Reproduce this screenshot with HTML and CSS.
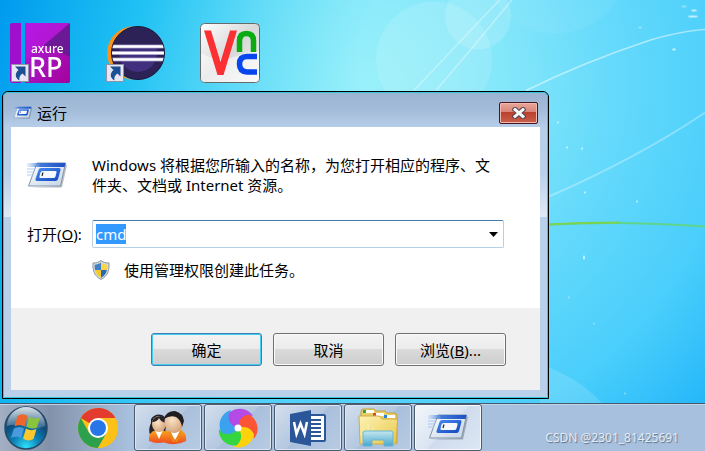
FILE: index.html
```html
<!DOCTYPE html>
<html lang="zh-CN">
<head>
    <meta charset="UTF-8">
    <meta name="viewport" content="width=device-width, initial-scale=1.0">
    <title>运行</title>
    <link rel="stylesheet" href="styles.css">
</head>
<body>
    <!-- shared drawings -->
    <svg class="defs" width="0" height="0" aria-hidden="true">
        <defs>
            <linearGradient id="runBar" x1="0" x2="1" y1="0" y2="0">
                <stop offset="0" stop-color="#8fb6ee" stop-opacity="0.2"/>
                <stop offset="0.35" stop-color="#3f78d8"/>
                <stop offset="1" stop-color="#1c50c4"/>
            </linearGradient>
            <linearGradient id="runBlue" x1="0" x2="1" y1="0" y2="1">
                <stop offset="0" stop-color="#4a8cf0"/>
                <stop offset="1" stop-color="#1146bd"/>
            </linearGradient>
            <linearGradient id="runSheet" x1="0" x2="1" y1="0" y2="1">
                <stop offset="0" stop-color="#ffffff"/>
                <stop offset="1" stop-color="#c3d3e4"/>
            </linearGradient>
        </defs>
        <symbol id="icon-run" viewBox="0 0 40 28">
            <path d="M3 25.5L35 25.5L40 3L38 2L33 24Z" fill="#000" opacity="0.25"/>
            <path d="M10 1H38.500L33.500 24H1.500Z" fill="url(#runSheet)" stroke="#8095ac" stroke-width="1"/>
            <path d="M0 1H38.500L37.500 5H0Z" fill="url(#runBar)"/>
            <path d="M0 7H8M0 10H7M0 13H6" stroke="#a9c8f2" stroke-width="1.500" opacity="0.6"/>
            <path d="M14 6H32Q34 6 33.500 8L31 17Q30.500 19 28.500 19H10Q8 19 8.500 17L11.500 8Q12 6 14 6Z" fill="url(#runBlue)"/>
            <path d="M15.500 9H28.500Q30 9 29.500 10.500L28.500 14.500Q28 16 26.500 16H13.500Q12 16 12.500 14.500L13.500 10.500Q14 9 15.500 9Z" fill="#f5f9ff"/>
            <path d="M16 10.500L15 14" stroke="#222" stroke-width="1.200"/>
        </symbol>
        <symbol id="icon-shortcut" viewBox="0 0 18 18">
            <rect x="0.500" y="0.500" width="17" height="17" fill="#e9e6f4" stroke="#8e94a5"/>
            <path d="M4 2.500H14.500V12.500L11.500 9.500C8.500 11.500 8 13.500 8.500 16.500C4 14 3.500 9.500 7.500 6Z" fill="#1d4f93"/>
        </symbol>
    </svg>

    <main class="desktop">
        <svg class="wallpaper" viewBox="0 0 705 404" preserveAspectRatio="xMidYMid slice" aria-hidden="true">
            <defs>
                <radialGradient id="sky" gradientUnits="userSpaceOnUse" cx="370" cy="80" r="480">
                    <stop offset="0" stop-color="#98f0fa"/>
                    <stop offset="0.280" stop-color="#84e7fa"/>
                    <stop offset="0.500" stop-color="#66dafb"/>
                    <stop offset="0.760" stop-color="#4acefb"/>
                    <stop offset="1" stop-color="#20b4fa"/>
                </radialGradient>
                <linearGradient id="deep" x1="0" x2="1" y1="0" y2="0.150">
                    <stop offset="0" stop-color="#009aee"/>
                    <stop offset="0.200" stop-color="#14bdf2" stop-opacity="0.850"/>
                    <stop offset="0.520" stop-color="#50d8f5" stop-opacity="0"/>
                </linearGradient>
            </defs>
            <rect width="705" height="404" fill="url(#sky)"/>
            <rect width="705" height="404" fill="url(#deep)"/>
            <circle cx="434" cy="60" r="58" fill="#fff" opacity="0.120"/>
            <circle cx="478" cy="17" r="33" fill="#fff" opacity="0.150"/>
            <circle cx="556" cy="-40" r="74" fill="#fff" opacity="0.060"/>
            <path d="M414 91Q456 46 500 0M436 91Q474 47 512 0" stroke="#fff" stroke-width="1.500" opacity="0.350" fill="none"/>
            <path d="M526 91Q585 62 652 40Q685 31 705 30" stroke="#fff" stroke-width="1.500" opacity="0.500" fill="none"/>
            <path d="M549 197Q640 157 705 113" stroke="#fff" stroke-width="2" opacity="0.300" fill="none"/>
            <path d="M549 225Q625 221 705 227" stroke="#5fd58c" stroke-width="2" fill="none"/>
            <path d="M549 225Q580 223 620 223" stroke="#7cd34c" stroke-width="2" fill="none"/>
            <path d="M540 365Q578 377 602 404H540Z" fill="#fff" opacity="0.140"/>
            <g fill="#fff" opacity="0.700">
                <ellipse cx="693" cy="17" rx="5" ry="1"/>
                <ellipse cx="694" cy="11" rx="3" ry="1"/>
                <ellipse cx="684" cy="7" rx="3" ry="1" opacity="0.500"/>
                <ellipse cx="674" cy="50" rx="2" ry="1"/>
                <ellipse cx="640" cy="28" rx="2" ry="1" opacity="0.500"/>
                <circle cx="558" cy="123" r="1"/>
                <circle cx="567" cy="148" r="1"/>
                <circle cx="582" cy="149" r="1"/>
                <circle cx="585" cy="193" r="1"/>
                <circle cx="637" cy="202" r="1"/>
                <ellipse cx="584" cy="258" rx="1" ry="2"/>
                <circle cx="569" cy="298" r="1" opacity="0.600"/>
                <circle cx="594" cy="324" r="1" opacity="0.500"/>
                <circle cx="625" cy="394" r="1" opacity="0.600"/>
            </g>
        </svg>

        <ul class="shortcuts">
            <li class="shortcut">
                <svg width="60" height="60" viewBox="0 0 60 60" role="img" aria-label="Axure RP">
                    <defs>
                        <linearGradient id="axure" x1="0" x2="1" y1="0" y2="1">
                            <stop offset="0" stop-color="#b414e0"/>
                            <stop offset="0.500" stop-color="#a614bc"/>
                            <stop offset="1" stop-color="#a6009c"/>
                        </linearGradient>
                    </defs>
                    <path d="M2 0H11V60H2Q0 60 0 58V2Q0 0 2 0Z" fill="#a010cc"/>
                    <path d="M15 0H58Q60 0 60 2V58Q60 60 58 60H15Z" fill="url(#axure)"/>
                    <path d="M60 0L34 22L60 34Z" fill="#5c1b8c" opacity="0.800"/>
                    <path d="M15 0H60L15 38Z" fill="#c21cf0" opacity="0.350"/>
                    <text class="axure-name" x="21" y="30">axure</text>
                    <text class="axure-rp" x="19" y="54">RP</text>
                    <use href="#icon-shortcut" x="1" y="41" width="18" height="18"/>
                </svg>
            </li>
            <li class="shortcut">
                <svg width="60" height="60" viewBox="0 0 60 60" role="img" aria-label="Eclipse">
                    <defs>
                        <clipPath id="eclipseDisc"><circle cx="33" cy="30" r="26"/></clipPath>
                    </defs>
                    <path d="M27 3C-6 8 -6 52 27 57C2 49 2 12 27 3Z" fill="#f7941e"/>
                    <circle cx="33" cy="30" r="26.500" fill="#2c2255" stroke="#1b1538"/>
                    <g clip-path="url(#eclipseDisc)">
                        <circle cx="33" cy="30" r="19" fill="#41307d"/>
                        <rect x="6" y="3" width="54" height="20" fill="#2c2255"/>
                        <path d="M6 23.500H60M6 30H60M6 36.500H60" stroke="#8d83bd" stroke-width="4"/>
                        <path d="M6 23.500H60M6 30H60M6 36.500H60" stroke="#fff" stroke-width="2.500"/>
                    </g>
                    <use href="#icon-shortcut" x="1" y="41" width="18" height="18"/>
                </svg>
            </li>
            <li class="shortcut">
                <svg width="60" height="60" viewBox="0 0 60 60" role="img" aria-label="VNC">
                    <defs>
                        <linearGradient id="vnc" x1="0" x2="1" y1="0" y2="1">
                            <stop offset="0" stop-color="#ffffff"/>
                            <stop offset="0.500" stop-color="#d8d8d8"/>
                            <stop offset="1" stop-color="#f8f8f8"/>
                        </linearGradient>
                    </defs>
                    <rect x="0.500" y="0.500" width="59" height="59" rx="4" fill="url(#vnc)" stroke="#666b6d"/>
                    <path d="M1 30Q18 40 34 34T59 28V56Q59 59 56 59H4Q1 59 1 56Z" fill="#fff" opacity="0.500"/>
                    <path d="M4 7.500H11L20.500 39L30 7.500H37L23.500 52H17.500Z" fill="#fb3032"/>
                    <path d="M39.500 29V18Q39.500 10.500 46.500 10.500T53.500 18V29" fill="none" stroke="#0aac11" stroke-width="5.500"/>
                    <path d="M57 33.500H47Q39.500 33.500 39.500 41T47 49H57" fill="none" stroke="#0746ee" stroke-width="5.500"/>
                </svg>
            </li>
        </ul>

        <section class="window" role="dialog" aria-labelledby="windowTitle">
            <header class="title-bar">
                <svg class="title-icon" aria-hidden="true"><use href="#icon-run"/></svg>
                <h1 id="windowTitle">运行</h1>
                <button type="button" class="close" aria-label="关闭">
                    <svg width="14" height="12" viewBox="0 0 14 12" aria-hidden="true">
                        <path d="M3 2.500L11 9.500M11 2.500L3 9.500" stroke="#50434d" stroke-width="5" stroke-linecap="square"/>
                        <path d="M3 2.500L11 9.500M11 2.500L3 9.500" stroke="#f6f6f6" stroke-width="3" stroke-linecap="square"/>
                    </svg>
                </button>
            </header>

            <form class="run-form" id="runForm">
                <div class="fields">
                    <svg class="run-icon" aria-hidden="true"><use href="#icon-run"/></svg>
                    <p class="intro">Windows 将根据您所输入的名称，为您打开相应的程序、文件夹、文档或 Internet 资源。</p>

                    <label for="command">打开(<u>O</u>):</label>
                    <div class="combo">
                        <input type="text" id="command" name="command" value="cmd" autocomplete="off" spellcheck="false">
                        <button type="button" class="combo-arrow" aria-label="展开列表">
                            <svg width="9" height="5" viewBox="0 0 9 5" aria-hidden="true"><path d="M0 0H9L4.500 5Z"/></svg>
                        </button>
                    </div>

                    <div class="admin-note">
                        <svg width="18" height="20" viewBox="0 0 18 20" aria-hidden="true">
                            <path d="M9 0.500C6.500 2.500 4 3 1 3C0.500 11 2.500 16 9 19.500C15.500 16 17.500 11 17 3C14 3 11.500 2.500 9 0.500Z" fill="#d5d9dc" stroke="#8d979f"/>
                            <path d="M9 2.500C7 4 5 4.500 2.800 4.700C2.600 7 2.700 8.500 3.100 10H9Z" fill="#3f7fc6"/>
                            <path d="M9 2.500C11 4 13 4.500 15.200 4.700C15.400 7 15.300 8.500 14.900 10H9Z" fill="#f8d648"/>
                            <path d="M3.100 10C4 13.500 5.500 15.700 9 17.800V10Z" fill="#f3c92c"/>
                            <path d="M14.900 10C14 13.500 12.500 15.700 9 17.800V10Z" fill="#2b68b2"/>
                        </svg>
                        <span>使用管理权限创建此任务。</span>
                    </div>
                </div>

                <div class="actions">
                    <button type="submit" class="default">确定</button>
                    <button type="button">取消</button>
                    <button type="button">浏览(<u>B</u>)...</button>
                </div>
            </form>
        </section>
    </main>

    <nav class="taskbar">
        <button type="button" class="start" aria-label="开始">
            <svg width="44" height="44" viewBox="0 0 44 44" aria-hidden="true">
                <defs>
                    <radialGradient id="orb" cx="0.500" cy="0.950" r="0.900">
                        <stop offset="0" stop-color="#2fe0fa"/>
                        <stop offset="0.350" stop-color="#0c84b8"/>
                        <stop offset="0.700" stop-color="#0d4a7c"/>
                        <stop offset="1" stop-color="#52708c"/>
                    </radialGradient>
                    <linearGradient id="orbShine" x1="0" x2="0" y1="0" y2="1">
                        <stop offset="0" stop-color="#e6edf2" stop-opacity="0.900"/>
                        <stop offset="1" stop-color="#a7bccb" stop-opacity="0.250"/>
                    </linearGradient>
                </defs>
                <circle cx="22" cy="22" r="21" fill="url(#orb)" stroke="#264a66" stroke-width="1.500"/>
                <path d="M3 20A19 19 0 0 1 41 20Q31 25 22 21T3 20Z" fill="url(#orbShine)"/>
                <path d="M13.500 10Q18.500 6.500 23.500 10L20.500 20.500Q16 17.500 10.500 20.500Z" fill="#f0652a"/>
                <path d="M25 10.500Q30 14 36 11.500L33 21.500Q27.500 24 22.500 20.500Z" fill="#8ac43c"/>
                <path d="M10 22.500Q15.500 19.500 20 22.500L17 32Q12 29.500 7 32Z" fill="#4a9ade"/>
                <path d="M22 22.500Q27 25.500 32.500 23L29.500 33Q24 36 19 32.500Z" fill="#fbc72d"/>
            </svg>
        </button>
        <button type="button" class="pinned" aria-label="Chrome">
            <svg width="40" height="40" viewBox="0 0 40 40" aria-hidden="true">
                <circle cx="20" cy="20" r="20" fill="#fbc116"/>
                <path d="M20 20L2.700 10A20 20 0 0 1 37.300 10Z" fill="#e33b2e"/>
                <path d="M20 10H37.300A20 20 0 0 0 20 0Z" fill="#e33b2e"/>
                <path d="M2.700 10A20 20 0 0 0 20 40L28.700 25L20 20L11.300 25Z" fill="#2da04e"/>
                <path d="M20 10H37.300A20 20 0 0 1 20 40L28.700 25Z" fill="#fbc116"/>
                <circle cx="20" cy="20" r="10" fill="#fff"/>
                <circle cx="20" cy="20" r="8" fill="#2676e8"/>
            </svg>
        </button>
        <button type="button" class="task" aria-label="用户">
            <svg width="40" height="36" viewBox="0 0 40 36" aria-hidden="true">
                <defs>
                    <linearGradient id="coat" x1="0" x2="0" y1="0" y2="1">
                        <stop offset="0" stop-color="#fbae1c"/>
                        <stop offset="1" stop-color="#ed4a20"/>
                    </linearGradient>
                    <radialGradient id="skin" cx="0.400" cy="0.400" r="0.700">
                        <stop offset="0" stop-color="#fbe3c8"/>
                        <stop offset="1" stop-color="#d09c70"/>
                    </radialGradient>
                </defs>
                <path d="M3 9Q7 3 14 5Q19 7 18 15L17 25H2Q0 19 3 13Z" fill="#24242a"/>
                <path d="M1 31Q0 22 8 20H15Q20 22 20 31Q10 35 1 31Z" fill="url(#coat)"/>
                <path d="M7 20L11 29L15 20Z" fill="#fff"/>
                <ellipse cx="11" cy="14" rx="7" ry="8" fill="url(#skin)"/>
                <path d="M4 12Q6 6 13 6Q17 7 18 13Q13 12 11 8Q9 12 4 12Z" fill="#24242a"/>
                <path d="M15 32Q14 21 23 19H31Q39 22 38 31Q27 37 15 32Z" fill="url(#coat)"/>
                <path d="M22 21L27 30L32 21Z" fill="#fff"/>
                <path d="M21 21L26 32M33 21L28 32" stroke="#e98b16" stroke-width="2"/>
                <ellipse cx="26" cy="12" rx="9.500" ry="11" fill="url(#skin)"/>
                <path d="M16 9Q18 1 27 1Q35 3 36 11L34 17Q33 10 28 7Q22 5 16 9Z" fill="#1e1e22"/>
            </svg>
        </button>
        <button type="button" class="task" aria-label="浏览器">
            <svg width="40" height="40" viewBox="-20 -20 40 40" aria-hidden="true">
                <path d="M0 0C-7 -2 -11 -8 -9 -15C-2 -21 9 -21 15 -12C9 -13 6 -9 6 -3Z" fill="#b44be6"/>
                <path d="M0 0C-7 -2 -11 -8 -9 -15C-2 -21 9 -21 15 -12C9 -13 6 -9 6 -3Z" fill="#fb5436" transform="rotate(72)"/>
                <path d="M0 0C-7 -2 -11 -8 -9 -15C-2 -21 9 -21 15 -12C9 -13 6 -9 6 -3Z" fill="#fcd20d" transform="rotate(144)"/>
                <path d="M0 0C-7 -2 -11 -8 -9 -15C-2 -21 9 -21 15 -12C9 -13 6 -9 6 -3Z" fill="#34d53f" transform="rotate(216)"/>
                <path d="M0 0C-7 -2 -11 -8 -9 -15C-2 -21 9 -21 15 -12C9 -13 6 -9 6 -3Z" fill="#3aa2ef" transform="rotate(288)"/>
                <path d="M0 0C-7 -2 -11 -8 -9 -15L-4 -18Q-5 -9 2 -5Z" fill="#b44be6"/>
                <circle r="3.500" fill="#fff"/>
            </svg>
        </button>
        <button type="button" class="task" aria-label="Word">
            <svg width="36" height="36" viewBox="0 0 36 36" aria-hidden="true">
                <rect x="17" y="5" width="18" height="26" rx="1" fill="#fff" stroke="#2b579a" stroke-width="2"/>
                <path d="M20 10H31M20 14H31M20 18H31M20 22H31M20 26H31" stroke="#2b579a" stroke-width="2"/>
                <path d="M0 4L21 0V36L0 32Z" fill="#2b579a"/>
                <path d="M4 12L6.500 24L10.500 13.500L14.500 24L17 12" fill="none" stroke="#fff" stroke-width="2.500"/>
            </svg>
        </button>
        <button type="button" class="task" aria-label="资源管理器">
            <svg width="40" height="40" viewBox="0 0 40 40" aria-hidden="true">
                <defs>
                    <linearGradient id="folder" x1="0" x2="1" y1="0" y2="1">
                        <stop offset="0" stop-color="#fdf3b4"/>
                        <stop offset="1" stop-color="#e8c64a"/>
                    </linearGradient>
                    <linearGradient id="stand" x1="0" x2="0" y1="0" y2="1">
                        <stop offset="0" stop-color="#c3e9f5"/>
                        <stop offset="1" stop-color="#3fa6d4"/>
                    </linearGradient>
                </defs>
                <path d="M3 4Q3 1 5 1H16L18 3H27L29 5H36Q39 5 39 8V35H3Z" fill="#e7cd68" stroke="#c5a23c"/>
                <rect x="5" y="2" width="11" height="3" fill="#fff"/>
                <rect x="5" y="2" width="3" height="3" fill="#2fa246"/>
                <rect x="15" y="5" width="11" height="3" fill="#fff"/>
                <rect x="15" y="5" width="3" height="3" fill="#dc4a2e"/>
                <rect x="26" y="7" width="11" height="3" fill="#fff"/>
                <rect x="26" y="7" width="3" height="3" fill="#2b84cf"/>
                <path d="M1 8H20Q22 8 23 10L24 11H38Q39.500 11 39.500 13L38 36H2Z" fill="url(#folder)" stroke="#d1ad45"/>
                <path d="M10 16V35M2 26H19M4 20L16 32M16 20L4 32" stroke="#fff" opacity="0.500"/>
                <path d="M7 23H33Q35 23 35 25V38H26V32H14V38H5V25Q5 23 7 23Z" fill="url(#stand)" stroke="#62b5d6" opacity="0.950"/>
            </svg>
        </button>
        <button type="button" class="task active" aria-label="运行">
            <svg class="run-icon" aria-hidden="true"><use href="#icon-run"/></svg>
        </button>
        <span class="watermark">CSDN @2301_81425691</span>
    </nav>

    <script>
        const command = document.getElementById('command');
        command.focus();
        command.select();

        document.getElementById('runForm').addEventListener('submit', function(event) {
            event.preventDefault();
        });
    </script>
</body>
</html>
```

FILE: styles.css
```css
* {
    box-sizing: border-box;
}

body {
    margin: 0;
    min-height: 100vh;
    display: flex;
    flex-direction: column;
    font-family: "Noto Sans", "Noto Sans CJK SC", sans-serif;
    font-size: 15px;
    line-height: 20px;
    color: #000;
    overflow: hidden;
}

button,
input {
    font: inherit;
    color: inherit;
    padding: 0;
    margin: 0;
}

svg {
    display: block;
    flex: none;
}

.defs {
    position: absolute;
}

/* Desktop */
.desktop {
    position: relative;
    flex: 1;
    overflow: hidden;
    background: #48cdfb;
}

.wallpaper {
    position: absolute;
    top: 0;
    left: 0;
    width: 100%;
    height: 100%;
}

.shortcuts {
    position: relative;
    display: flex;
    gap: 15px;
    margin: 0;
    padding: 23px 0 0;
    list-style: none;
}

.shortcut {
    width: 80px;
    display: flex;
    justify-content: center;
}

.shortcut svg {
    overflow: visible;
}

.axure-name,
.axure-rp {
    font-family: "Noto Sans", sans-serif;
    font-weight: 500;
    fill: #fff;
}

.axure-name {
    font-size: 12px;
}

.axure-rp {
    font-size: 27px;
}

/* Run window */
.window {
    position: absolute;
    top: 91px;
    left: 2px;
    width: 547px;
    padding: 0 8px 8px;
    border: 1px solid #000;
    border-radius: 6px 6px 0 0;
    background: linear-gradient(#9ab3d1, #a3bcd9 18px, #b7cee9 36px, #b9cfea 80px, #dfe9f6 125px, #b9d0ea 125px);
    outline: 1px solid #35c5dc;
    outline-offset: -2px;
}

.title-bar {
    display: flex;
    align-items: center;
    gap: 5px;
    height: 35px;
    padding: 7px 2px 0;
}

.title-bar h1 {
    flex: 1;
    margin: 0;
    font-size: 15px;
    font-weight: normal;
}

.title-icon {
    width: 19px;
    height: 14px;
}

.close {
    display: flex;
    align-items: center;
    justify-content: center;
    width: 39px;
    height: 22px;
    border: 1px solid #4a1620;
    border-radius: 2px;
    background: linear-gradient(#e9a79b, #d98478 45%, #b8402c 45%, #c9604c);
    box-shadow: inset 0 0 0 1px #efb9b0;
}

.fields {
    display: grid;
    grid-template-columns: 65px 1fr;
    align-items: center;
    padding: 28px 36px 28px 16px;
    background: #fff;
}

.run-icon {
    width: 40px;
    height: 28px;
}

.intro {
    margin: 0 0 25px;
    padding-right: 8px;
}

.fields .run-icon {
    align-self: start;
    margin-top: 7px;
}

.combo {
    display: flex;
    height: 28px;
    padding: 2px 3px;
    border: 1px solid #b5cfe7;
    border-top-color: #3d7bad;
    border-radius: 2px;
    background: #fff;
}

.combo input {
    flex: 1;
    min-width: 0;
    border: none;
    outline: none;
    background: transparent;
}

.combo input::selection {
    background: #3399ff;
    color: #fff;
}

.combo-arrow {
    width: 14px;
    border: none;
    background: none;
    display: flex;
    align-items: center;
    justify-content: center;
}

.admin-note {
    grid-column: 2;
    display: flex;
    align-items: center;
    gap: 14px;
    margin-top: 12px;
}

.actions {
    display: flex;
    justify-content: flex-end;
    gap: 11px;
    padding: 25px 34px 24px;
    background: #f0f0f0;
}

.actions button {
    width: 111px;
    height: 33px;
    border: 1px solid #707070;
    border-radius: 3px;
    background: linear-gradient(#f3f3f3, #ebebeb 50%, #dadada 50%, #cdcdcd);
    box-shadow: inset 0 0 0 1px #fafafa;
}

.actions .default {
    border-color: #3c7fb1;
    box-shadow: inset 0 0 0 1px #43cdf0;
}

/* Taskbar */
.taskbar {
    display: flex;
    align-items: center;
    gap: 2px;
    height: 48px;
    padding-left: 4px;
    border-top: 1px solid #45586c;
    background: linear-gradient(to right, #a3afc2, #8292ab 50px, #98aac4 90px, #a7c0dd 130px);
    box-shadow: inset 0 1px 0 #c3d4e8;
}

.start,
.pinned {
    border: none;
    background: none;
}

.pinned {
    margin: 0 14px 0 28px;
}

.task {
    display: flex;
    align-items: center;
    justify-content: center;
    width: 68px;
    height: 47px;
    border: 1px solid #4c5b6e;
    border-radius: 3px;
    background: linear-gradient(135deg, #d3dfed, #b3c7e0 50%, #a9bfdc 50%, #b7cbe3);
    box-shadow: inset 0 0 0 1px #dbe6f2;
}

.task.active {
    background: linear-gradient(135deg, #f3f7fb, #d9e4f1 50%, #cfdced 50%, #dde7f3);
    box-shadow: inset 0 0 0 1px #f8fafd;
}

.watermark {
    margin: 20px 26px 0 auto;
    font-size: 12px;
    line-height: 16px;
    color: #e4ecf6;
    text-shadow: 1px 1px 1px #5f7186;
}
```
